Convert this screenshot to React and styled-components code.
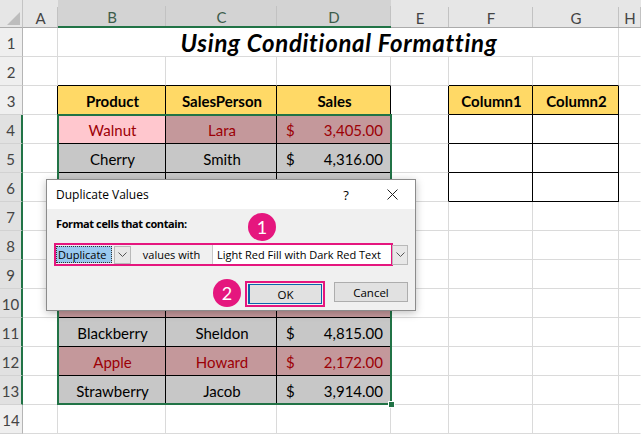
import React from "react";
import styled, { createGlobalStyle } from "styled-components";

const GlobalStyle = createGlobalStyle`
  html, body {
    margin: 0;
    padding: 0;
    background: #fff;
  }
  body {
    font-family: Lato, "Liberation Sans", sans-serif;
    overflow: hidden;
  }
`;

const GREEN = "#217346";
const MAGENTA = "#e5167e";
const GRID = "#dadada";

const COLS = ["A", "B", "C", "D", "E", "F", "G", "H"];
const SELECTED_COLS = ["B", "C", "D"];

const FILLS = {
  head: { bg: "#ffd966", ink: "#000", bold: true },
  gray: { bg: "#c7c7c7", ink: "#000" },
  dup: { bg: "#c4989b", ink: "#9c0006" },
  active: { bg: "#ffc7ce", ink: "#9c0006" },
  blank: { bg: "#fff", ink: "#000" },
};

// rows 6-10 sit under the dialog, so their text is left out
const sales = [
  [4, "Walnut", "Lara", "3,405.00", "dup"],
  [5, "Cherry", "Smith", "4,316.00", "gray"],
  [6, "", "", "", "gray"],
  [7, "", "", "", "gray"],
  [8, "", "", "", "dup"],
  [9, "", "", "", "gray"],
  [10, "", "", "", "dup"],
  [11, "Blackberry", "Sheldon", "4,815.00", "gray"],
  [12, "Apple", "Howard", "2,172.00", "dup"],
  [13, "Strawberry", "Jacob", "3,914.00", "gray"],
];

const cells = {
  B3: { text: "Product", kind: "head" },
  C3: { text: "SalesPerson", kind: "head" },
  D3: { text: "Sales", kind: "head" },
  F3: { text: "Column1", kind: "head" },
  G3: { text: "Column2", kind: "head" },
};
sales.forEach(([row, product, person, amount, kind]) => {
  cells["B" + row] = { text: product, kind: row === 4 ? "active" : kind };
  cells["C" + row] = { text: person, kind };
  cells["D" + row] = amount ? { money: amount, kind } : { text: "", kind };
});
[4, 5, 6].forEach((row) => {
  cells["F" + row] = { text: "", kind: "blank" };
  cells["G" + row] = { text: "", kind: "blank" };
});

const inTable = (col, row) => {
  const c = COLS.indexOf(col);
  if (c >= 1 && c <= 3 && row >= 3 && row <= 13) return true;
  if (c >= 5 && c <= 6 && row >= 3 && row <= 6) return true;
  return false;
};

const Sheet = styled.div`
  position: relative;
  width: 641px;
  height: 437px;
  display: grid;
  grid-template-columns: 23px 35px 108px 111px 114px 58px 84px 86px 1fr;
  grid-template-rows: 28px repeat(14, 29px) 1fr;
  background: #fff;
  overflow: hidden;
`;

const Corner = styled.div`
  grid-row: 1;
  grid-column: 1;
  background: #e6e6e6;
  border-right: 1px solid #c4c4c4;
  border-bottom: 1px solid #ababab;
  box-sizing: border-box;
`;

const ColHead = styled.div`
  grid-row: 1;
  grid-column: ${(p) => p.$c};
  box-sizing: border-box;
  padding-top: 8px;
  display: flex;
  align-items: center;
  justify-content: center;
  font-size: 15px;
  color: ${(p) => (p.$selected ? "#3d5c4a" : "#444")};
  background: linear-gradient(#c2c2c2, #c2c2c2) right bottom / 1px 20px no-repeat,
    ${(p) => (p.$selected ? "#d3d3d3" : "#e6e6e6")};
  border-bottom: ${(p) => (p.$selected ? `2px solid ${GREEN}` : "1px solid #ababab")};
`;

const RowHead = styled.div`
  grid-row: ${(p) => p.$r};
  grid-column: 1;
  box-sizing: border-box;
  display: flex;
  align-items: center;
  justify-content: center;
  padding-top: 2px;
  font-size: 15px;
  color: #444;
  background: ${(p) => (p.$selected ? "#e1e1e1" : "#efefef")};
  border-bottom: 1px solid #d2d2d2;
  border-right: ${(p) => (p.$selected ? `2px solid ${GREEN}` : "1px solid #b5b5b5")};
`;

const Cell = styled.div`
  grid-row: ${(p) => p.$r};
  grid-column: ${(p) => p.$c} / span ${(p) => p.$span || 1};
  box-sizing: border-box;
  display: flex;
  align-items: center;
  justify-content: ${(p) => (p.$money ? "space-between" : "center")};
  padding: 2px 7px 0 9px;
  font-size: 15px;
  white-space: nowrap;
  background: ${(p) => p.$bg};
  color: ${(p) => p.$ink};
  font-weight: ${(p) => (p.$bold ? 700 : 400)};
  border-right: 1px solid ${(p) => p.$rightLine};
  border-bottom: 1px solid ${(p) => p.$bottomLine};
`;

const Title = styled(Cell)`
  font-size: 24px;
  font-weight: 700;
  font-style: italic;
  letter-spacing: 0.7px;
  padding-top: 0;
`;

const Selection = styled.div`
  grid-row: 5 / 15;
  grid-column: 3 / 6;
  margin: -1px -1px 0 -1px;
  border: 2px solid ${GREEN};
  position: relative;
  pointer-events: none;
  z-index: 1;
`;

const FillHandle = styled.span`
  position: absolute;
  right: -5px;
  bottom: -5px;
  width: 5px;
  height: 5px;
  background: ${GREEN};
  border: 1px solid #fff;
`;

const Dialog = styled.div`
  position: absolute;
  left: 46px;
  top: 179px;
  width: 370px;
  height: 132px;
  box-sizing: border-box;
  z-index: 2;
  background: #f0f0f0;
  border: 1px solid #8c8c8c;
  box-shadow: 0 2px 8px rgba(0, 0, 0, 0.25);
  font-family: "Open Sans", "Noto Sans", sans-serif;
  font-size: 11px;
  color: #000;
  display: flex;
  flex-direction: column;
`;

const TitleBar = styled.div`
  height: 29px;
  background: #fff;
  display: flex;
  align-items: center;
  padding: 0 0 0 9px;
  font-size: 12px;
`;

const TitleText = styled.span`
  flex: 1;
`;

const TitleButton = styled.span`
  width: 46px;
  display: flex;
  justify-content: center;
  align-items: center;
  font-size: 13px;
`;

const Body = styled.div`
  flex: 1;
  padding: 6px 7px 0 7px;
  display: flex;
  flex-direction: column;
`;

const Label = styled.div`
  font-weight: 700;
  letter-spacing: -0.4px;
  height: 17px;
  line-height: 17px;
  padding-left: 2px;
`;

const FieldRow = styled.div`
  display: flex;
  align-items: center;
  margin-top: 11px;
`;

const Highlight = styled.div`
  display: flex;
  align-items: center;
  border: 2px solid ${MAGENTA};
  padding: ${(p) => p.$pad || "0"};
`;

const Combo = styled.div`
  width: 56px;
  height: 17px;
  box-sizing: border-box;
  background: #99c9ef;
  border: 1px dotted #333;
  display: flex;
  align-items: center;
  padding-left: 1px;
`;

const ArrowBox = styled.div`
  width: 17px;
  height: ${(p) => p.$h || 18}px;
  margin-left: ${(p) => p.$gap || 0}px;
  box-sizing: border-box;
  border: 1px solid #b9b9b9;
  background: #e8e8e8;
  display: flex;
  align-items: center;
  justify-content: center;
`;

const Between = styled.div`
  width: 81px;
  text-align: center;
`;

const TextBox = styled.div`
  width: 179px;
  height: 19px;
  box-sizing: border-box;
  background: #fff;
  border-left: 1px solid #c8c8c8;
  display: flex;
  align-items: center;
  padding-left: 4px;
`;

const Buttons = styled.div`
  display: flex;
  justify-content: flex-end;
  align-items: flex-start;
  gap: 9px;
  margin-top: 15px;
`;

const Button = styled.div`
  width: 74px;
  height: 20px;
  box-sizing: border-box;
  background: #e1e1e1;
  border: 1px solid ${(p) => (p.$primary ? "#0a64ad" : "#adadad")};
  border-left-width: ${(p) => (p.$primary ? 2 : 1)}px;
  margin-top: ${(p) => (p.$primary ? 0 : 1)}px;
  display: flex;
  align-items: center;
  justify-content: center;
  font-size: 11.5px;
`;

const Badge = styled.div`
  position: absolute;
  left: ${(p) => p.$x}px;
  top: ${(p) => p.$y}px;
  width: 28px;
  height: 28px;
  border-radius: 50%;
  background: ${MAGENTA};
  color: #fff;
  font-family: Lato, sans-serif;
  font-size: 18px;
  display: flex;
  align-items: center;
  justify-content: center;
`;

const Chevron = () => (
  <svg width="9" height="6" viewBox="0 0 9 6">
    <polyline points="0.5,0.5 4.5,4.5 8.5,0.5" fill="none" stroke="#555" strokeWidth="1" />
  </svg>
);

const CloseIcon = () => (
  <svg width="11" height="11" viewBox="0 0 11 11">
    <path d="M0.5 0.5 L10.5 10.5 M10.5 0.5 L0.5 10.5" stroke="#222" strokeWidth="1" />
  </svg>
);

const CornerMark = () => (
  <svg width="23" height="28" viewBox="0 0 23 28">
    <polygon points="7,25 20,25 20,12" fill="#bdbdbd" />
  </svg>
);

const renderCell = (col, row, c) => {
  const data = cells[col + row];
  const fill = data ? FILLS[data.kind] : FILLS.blank;
  const next = COLS[c + 1];
  const rightLine = col === "H" ? "transparent" : inTable(col, row) || (next && inTable(next, row)) ? "#000" : GRID;
  const bottomLine = inTable(col, row) || inTable(col, row + 1) ? "#000" : GRID;
  return (
    <Cell
      key={col + row}
      $r={row + 1}
      $c={c + 2}
      $bg={fill.bg}
      $ink={fill.ink}
      $bold={fill.bold}
      $money={data && data.money}
      $rightLine={rightLine}
      $bottomLine={bottomLine}
    >
      {data && data.money ? (
        <>
          <span>$</span>
          <span>{data.money}</span>
        </>
      ) : (
        data && data.text
      )}
    </Cell>
  );
};

const App = () => {
  const rows = Array.from({ length: 14 }, (_, i) => i + 1);

  return (
    <>
      <GlobalStyle />
      <Sheet>
        <Corner>
          <CornerMark />
        </Corner>
        {COLS.map((col, c) => (
          <ColHead key={col} $c={c + 2} $selected={SELECTED_COLS.includes(col)}>
            {col}
          </ColHead>
        ))}

        {rows.map((row) => (
          <React.Fragment key={row}>
            <RowHead $r={row + 1} $selected={row >= 4 && row <= 13}>
              {row}
            </RowHead>
            {row === 1 ? (
              <>
                {renderCell("A", 1, 0)}
                <Title $r={2} $c={3} $span={6} $bg="#fff" $ink="#000" $rightLine={GRID} $bottomLine={GRID}>
                  Using Conditional Formatting
                </Title>
                {renderCell("H", 1, 7)}
              </>
            ) : (
              COLS.map((col, c) => renderCell(col, row, c))
            )}
          </React.Fragment>
        ))}

        <Selection>
          <FillHandle />
        </Selection>

        <Dialog>
          <TitleBar>
            <TitleText>Duplicate Values</TitleText>
            <TitleButton>?</TitleButton>
            <TitleButton>
              <CloseIcon />
            </TitleButton>
          </TitleBar>
          <Body>
            <Label>Format cells that contain:</Label>
            <FieldRow>
              <Highlight>
                <Combo>Duplicate</Combo>
                <ArrowBox $gap={2} $h={18}>
                  <Chevron />
                </ArrowBox>
                <Between>values with</Between>
                <TextBox>Light Red Fill with Dark Red Text</TextBox>
              </Highlight>
              <ArrowBox $gap={-1} $h={20}>
                <Chevron />
              </ArrowBox>
            </FieldRow>
            <Buttons>
              <Highlight $pad="1px">
                <Button $primary>OK</Button>
              </Highlight>
              <Button>Cancel</Button>
            </Buttons>
          </Body>
          <Badge $x={201} $y={33}>1</Badge>
          <Badge $x={166} $y={99}>2</Badge>
        </Dialog>
      </Sheet>
    </>
  );
};

export default App;
